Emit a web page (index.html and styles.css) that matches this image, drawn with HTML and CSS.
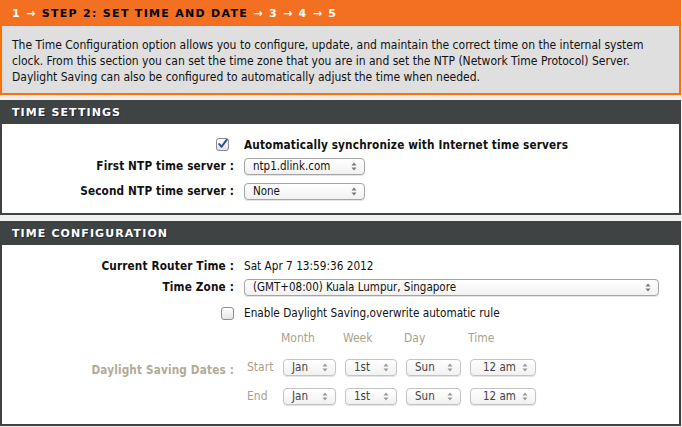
FILE: index.html
```html
<!DOCTYPE html>
<html>
<head>
  <title>Set Time and Date</title>
  <link rel="stylesheet" href="styles.css">
</head>
<body>
  <div class="wizard">
    <div class="step-bar"><span class="step-other">1 &rarr;</span> STEP 2: SET TIME AND DATE <span class="step-other">&rarr; 3 &rarr; 4 &rarr; 5</span></div>
    <div class="intro">
      The Time Configuration option allows you to configure, update, and maintain the correct time on the internal system
      clock. From this section you can set the time zone that you are in and set the NTP (Network Time Protocol) Server.
      Daylight Saving can also be configured to automatically adjust the time when needed.
    </div>

    <div class="section">
      <div class="section-title">TIME SETTINGS</div>
      <div class="section-body settings-body">
        <div class="row">
          <div class="label"><span class="check checked"><svg width="12" height="12" viewBox="0 0 12 12"><path d="M2.5 6.2 L5 9 L10.5 1.5" fill="none" stroke="#2c4f96" stroke-width="2.2" stroke-linecap="round" stroke-linejoin="round"/></svg></span></div>
          <div class="value strong">Automatically synchronize with Internet time servers</div>
        </div>
        <div class="row row-first-ntp">
          <div class="label">First NTP time server :</div>
          <div class="value"><span class="select w-ntp"><span>ntp1.dlink.com</span><svg class="arrows" width="6" height="9" viewBox="0 0 6 9"><path d="M0.5 3.5 L3 0.5 L5.5 3.5 Z M0.5 5.5 L3 8.5 L5.5 5.5 Z" fill="#777"/></svg></span></div>
        </div>
        <div class="row row-second-ntp">
          <div class="label">Second NTP time server :</div>
          <div class="value"><span class="select w-ntp"><span>None</span><svg class="arrows" width="6" height="9" viewBox="0 0 6 9"><path d="M0.5 3.5 L3 0.5 L5.5 3.5 Z M0.5 5.5 L3 8.5 L5.5 5.5 Z" fill="#777"/></svg></span></div>
        </div>
      </div>
    </div>

    <div class="section section-config">
      <div class="section-title">TIME CONFIGURATION</div>
      <div class="section-body config-body">
        <div class="row">
          <div class="label">Current Router Time :</div>
          <div class="value">Sat Apr 7 13:59:36 2012</div>
        </div>
        <div class="row row-zone">
          <div class="label">Time Zone :</div>
          <div class="value"><span class="select w-zone"><span>(GMT+08:00) Kuala Lumpur, Singapore</span><svg class="arrows" width="6" height="9" viewBox="0 0 6 9"><path d="M0.5 3.5 L3 0.5 L5.5 3.5 Z M0.5 5.5 L3 8.5 L5.5 5.5 Z" fill="#777"/></svg></span></div>
        </div>
        <div class="row row-dst">
          <div class="label"><span class="check"></span></div>
          <div class="value">Enable Daylight Saving,overwrite automatic rule</div>
        </div>

        <div class="dst-grid">
          <div class="dst-head dst-first">Month</div>
          <div class="dst-head">Week</div>
          <div class="dst-head">Day</div>
          <div class="dst-head">Time</div>

          <div class="dst-label">Daylight Saving Dates :</div>

          <div class="dst-edge">Start</div>
          <div><span class="select faded w-month"><span>Jan</span><svg class="arrows" width="6" height="9" viewBox="0 0 6 9"><path d="M0.5 3.5 L3 0.5 L5.5 3.5 Z M0.5 5.5 L3 8.5 L5.5 5.5 Z" fill="#999"/></svg></span></div>
          <div><span class="select faded w-week"><span>1st</span><svg class="arrows" width="6" height="9" viewBox="0 0 6 9"><path d="M0.5 3.5 L3 0.5 L5.5 3.5 Z M0.5 5.5 L3 8.5 L5.5 5.5 Z" fill="#999"/></svg></span></div>
          <div><span class="select faded w-day"><span>Sun</span><svg class="arrows" width="6" height="9" viewBox="0 0 6 9"><path d="M0.5 3.5 L3 0.5 L5.5 3.5 Z M0.5 5.5 L3 8.5 L5.5 5.5 Z" fill="#999"/></svg></span></div>
          <div><span class="select faded w-time"><span>12 am</span><svg class="arrows" width="6" height="9" viewBox="0 0 6 9"><path d="M0.5 3.5 L3 0.5 L5.5 3.5 Z M0.5 5.5 L3 8.5 L5.5 5.5 Z" fill="#999"/></svg></span></div>

          <div class="dst-edge">End</div>
          <div><span class="select faded w-month"><span>Jan</span><svg class="arrows" width="6" height="9" viewBox="0 0 6 9"><path d="M0.5 3.5 L3 0.5 L5.5 3.5 Z M0.5 5.5 L3 8.5 L5.5 5.5 Z" fill="#999"/></svg></span></div>
          <div><span class="select faded w-week"><span>1st</span><svg class="arrows" width="6" height="9" viewBox="0 0 6 9"><path d="M0.5 3.5 L3 0.5 L5.5 3.5 Z M0.5 5.5 L3 8.5 L5.5 5.5 Z" fill="#999"/></svg></span></div>
          <div><span class="select faded w-day"><span>Sun</span><svg class="arrows" width="6" height="9" viewBox="0 0 6 9"><path d="M0.5 3.5 L3 0.5 L5.5 3.5 Z M0.5 5.5 L3 8.5 L5.5 5.5 Z" fill="#999"/></svg></span></div>
          <div><span class="select faded w-time"><span>12 am</span><svg class="arrows" width="6" height="9" viewBox="0 0 6 9"><path d="M0.5 3.5 L3 0.5 L5.5 3.5 Z M0.5 5.5 L3 8.5 L5.5 5.5 Z" fill="#999"/></svg></span></div>
        </div>
      </div>
    </div>
  </div>
</body>
</html>
```

FILE: styles.css
```css
body {
  margin: 0;
  background-color: #efefef;
  font-family: "DejaVu Sans Condensed", "Liberation Sans", sans-serif;
  font-size: 11.7px;
  color: #111;
}

.wizard {
  width: 681px;
}

/* orange step bar */
.step-bar {
  height: 26px;
  line-height: 28px;
  padding-left: 12px;
  background-color: #f36f21;
  font-family: "DejaVu Sans", sans-serif;
  font-weight: bold;
  font-size: 11px;
  letter-spacing: 1.3px;
  color: #000;
}

.step-other {
  color: #fff;
}

.intro {
  background-color: #dfdfdf;
  border: 2px solid #ff7000;
  border-top: none;
  padding: 11px 24px 8px 10px;
  font-size: 12px;
  line-height: 16px;
}

/* sections */
.section {
  margin-top: 5px;
}

.section-config {
  margin-top: 6px;
}

.section-title {
  height: 24px;
  line-height: 26px;
  padding-left: 12px;
  background-color: #404343;
  color: #fff;
  font-family: "DejaVu Sans", sans-serif;
  font-weight: bold;
  font-size: 11px;
  letter-spacing: 1.1px;
  text-shadow: 1px 1px 0 #1c2a3c;
}

.section-body {
  background-color: #fff;
  border: 2px solid #404343;
  border-top: none;
}

.settings-body {
  padding: 11px 0 12px 0;
}

.config-body {
  padding: 11px 0 18px 0;
}

.row {
  display: grid;
  grid-template-columns: 232px 1fr;
  column-gap: 10px;
  align-items: center;
  height: 20px;
}

.row-first-ntp {
  margin-top: 1px;
}

.row-second-ntp {
  margin-top: 5px;
}

.row-zone {
  margin-top: 1px;
}

.row-dst {
  margin-top: 6px;
}

.label {
  text-align: right;
  font-weight: bold;
  letter-spacing: 0.15px;
  display: flex;
  justify-content: flex-end;
  align-items: center;
}

.strong {
  font-weight: bold;
  letter-spacing: 0.15px;
}

/* fake mac style controls */
.check {
  display: inline-flex;
  align-items: center;
  justify-content: center;
  width: 11px;
  height: 11px;
  border: 1px solid #8d8d8d;
  border-radius: 3px;
  background: linear-gradient(#ffffff, #e4e4e4);
}

.check.checked {
  margin-right: 5px;
  margin-top: -2px;
}

.select {
  display: inline-flex;
  align-items: center;
  justify-content: space-between;
  box-sizing: border-box;
  height: 17px;
  padding: 0 7px 0 8px;
  border: 1px solid #a5a5a5;
  border-radius: 4px;
  background: linear-gradient(#ffffff, #f1f1f1);
  box-shadow: 0 1px 1px rgba(0, 0, 0, 0.12);
  font-family: "DejaVu Sans Condensed", "Liberation Sans", sans-serif;
  font-size: 11.5px;
  color: #111;
  letter-spacing: 0;
}

.select.faded {
  border-color: #c4c4c4;
  color: #444;
}

.w-ntp { width: 121px; }
.w-zone { width: 415px; }
.w-month { width: 53px; }
.w-week { width: 52px; }
.w-day { width: 55px; }
.w-time { width: 66px; padding-left: 12px; }

/* daylight saving table */
.dst-grid {
  display: grid;
  grid-template-columns: 232px 49px 62px 61px 64px 66px;
  grid-template-rows: 20px 20px 20px;
  row-gap: 9px;
  align-items: center;
  margin-top: 5px;
  color: #aaa28d;
}

.dst-head {
  font-size: 12px;
  margin-left: -2px;
}

.dst-first {
  grid-column: 3;
}

.dst-label {
  grid-column: 1;
  grid-row: 2 / 4;
  align-self: start;
  padding-top: 6px;
  text-align: right;
  font-weight: bold;
  letter-spacing: 0.15px;
  color: #b3ab96;
}

.dst-edge {
  padding-left: 13px;
  font-size: 12px;
}
```
